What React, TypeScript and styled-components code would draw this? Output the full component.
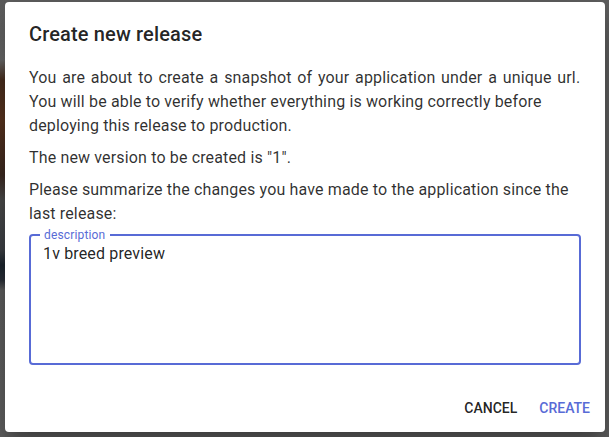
import React from "react";
import styled, { createGlobalStyle } from "styled-components";

const Global = createGlobalStyle`
  html, body {
    margin: 0;
    padding: 0;
    width: 609px;
    height: 437px;
    overflow: hidden;
  }
  body {
    font-family: Roboto, "Liberation Sans", sans-serif;
    background:
      linear-gradient(
        to bottom,
        #5d5d5d 0px,
        #6a6a6a 60px,
        #4a2f1f 80px,
        #5b3520 120px,
        #3d2a22 175px,
        #4c4c4c 200px,
        #3e4146 250px,
        #1d2630 265px,
        #2a3038 280px,
        #5f5f5f 290px,
        #626262 437px
      ) left top / 5px 100% no-repeat,
      #606060;
  }
`;

const Page = styled.div`
  width: 609px;
  height: 437px;
  padding: 2px 0 0 5px;
  box-sizing: border-box;
`;

const Dialog = styled.div`
  width: 600px;
  height: 430px;
  box-sizing: border-box;
  background: #fff;
  border-radius: 4px;
  display: flex;
  flex-direction: column;
  box-shadow: 0px 11px 15px -7px rgba(0, 0, 0, 0.2),
    0px 24px 38px 3px rgba(0, 0, 0, 0.14),
    0px 9px 46px 8px rgba(0, 0, 0, 0.12);
`;

const Title = styled.h2`
  margin: 0;
  padding: 16px 24px;
  font-size: 20px;
  line-height: 32px;
  font-weight: 500;
  letter-spacing: 0.15px;
  color: rgba(0, 0, 0, 0.87);
`;

const Content = styled.div`
  flex: 1;
  padding: 0 24px;
  display: flex;
  flex-direction: column;
`;

const Text = styled.p`
  margin: 0 0 8px;
  font-size: 16px;
  line-height: 24px;
  letter-spacing: 0.15px;
  color: rgba(0, 0, 0, 0.82);
  &:last-of-type {
    margin-bottom: 0;
  }
`;

const Sentence = styled.span<{ $wide?: boolean }>`
  display: block;
  white-space: ${(p) => (p.$wide ? "nowrap" : "normal")};
  word-spacing: ${(p) => (p.$wide ? "1.6px" : "normal")};
`;

const Field = styled.div`
  position: relative;
  margin-top: 8px;
  height: 131px;
  box-sizing: border-box;
  border: 2px solid #586bd6;
  border-radius: 4px;
  display: flex;
`;

const Label = styled.span`
  position: absolute;
  top: -9px;
  left: 9px;
  padding: 0 5px 0 4px;
  background: #fff;
  font-size: 12px;
  line-height: 16px;
  letter-spacing: 0.15px;
  color: #586bd6;
`;

const Area = styled.textarea`
  flex: 1;
  border: none;
  outline: none;
  resize: none;
  background: transparent;
  padding: 8px 12px;
  margin: 0;
  font-family: Roboto, "Liberation Sans", sans-serif;
  font-size: 16px;
  line-height: 19px;
  letter-spacing: 0.15px;
  color: rgba(0, 0, 0, 0.87);
`;

const Actions = styled.div`
  display: flex;
  justify-content: flex-end;
  align-items: center;
  gap: 6px;
  padding: 8px 7px 6px 8px;
`;

const Button = styled.button<{ $primary?: boolean }>`
  min-width: 64px;
  height: 36px;
  padding: 6px 8px;
  border: none;
  background: transparent;
  border-radius: 4px;
  font-family: Roboto, "Liberation Sans", sans-serif;
  font-size: 14px;
  font-weight: 500;
  letter-spacing: 0;
  text-transform: uppercase;
  color: ${(p) => (p.$primary ? "#586bd6" : "rgba(0, 0, 0, 0.87)")};
  cursor: pointer;
`;

export default function App() {
  return (
    <>
      <Global />
      <Page>
        <Dialog>
          <Title>Create new release</Title>
          <Content>
            <Text>
              <Sentence $wide>
                You are about to create a snapshot of your application under a
                unique url.
              </Sentence>
              <Sentence>
                You will be able to verify whether everything is working
                correctly before deploying this release to production.
              </Sentence>
            </Text>
            <Text>The new version to be created is "1".</Text>
            <Text>
              Please summarize the changes you have made to the application
              since the last release:
            </Text>
            <Field>
              <Label>description</Label>
              <Area defaultValue="1v breed preview" />
            </Field>
          </Content>
          <Actions>
            <Button>Cancel</Button>
            <Button $primary>Create</Button>
          </Actions>
        </Dialog>
      </Page>
    </>
  );
}
